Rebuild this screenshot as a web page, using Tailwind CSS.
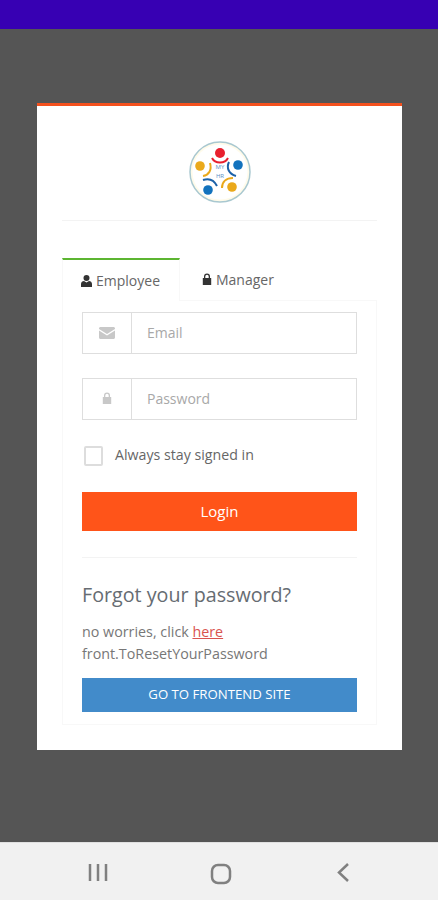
<!DOCTYPE html>
<html lang="en">
<head>
    <meta charset="UTF-8">
    <meta name="viewport" content="width=device-width, initial-scale=1.0">
    <title>Login</title>
    <script src="https://cdn.jsdelivr.net/npm/@tailwindcss/browser@4"></script>
</head>
<body class="font-['Open_Sans',sans-serif] bg-[#555555]">
    <div class="flex flex-col h-[900px] w-[438px] overflow-hidden">
        <div class="h-[29px] shrink-0 bg-[#3700b3]"></div>

        <main class="flex-1 pt-[74px] px-[37px]">
            <div class="w-[365px] h-[647px] bg-white border-t-[3px] border-[#f4511e] px-[25px]">
                <!-- logo -->
                <div class="h-[115px] pt-[35px] border-b border-[#f3f3f3] flex justify-center">
                    <svg class="w-[62px] h-[62px]" viewBox="0 0 62 62" fill="none">
                        <circle cx="31" cy="31" r="30" fill="#fffbea" stroke="#a9c8d0" stroke-width="1.500"/>
                        <circle cx="31" cy="31" r="27.500" fill="#ffffff"/>
                        <circle cx="31" cy="12" r="5" fill="#e8202e"/>
                        <path d="M23 17c3 6 13 6 16 0" stroke="#e8202e" stroke-width="2"/>
                        <circle cx="49" cy="24" r="4.800" fill="#1272bd"/>
                        <path d="M40 21c-3 6 0 12 7 14" stroke="#1c62a8" stroke-width="2"/>
                        <circle cx="11" cy="25" r="4.800" fill="#eaa91b"/>
                        <path d="M21 22c2 7-1 12-7 13" stroke="#eaa91b" stroke-width="2"/>
                        <circle cx="19" cy="49" r="4.800" fill="#1272bd"/>
                        <path d="M14 39c6-2 11 0 14 6" stroke="#1c62a8" stroke-width="2"/>
                        <circle cx="43" cy="46" r="4.800" fill="#eaa91b"/>
                        <path d="M33 47c0-6 4-10 11-10" stroke="#eaa91b" stroke-width="2"/>
                        <text x="31" y="28" text-anchor="middle" font-size="6" fill="#5b8fc4" font-family="Open Sans">MY</text>
                        <text x="31" y="37" text-anchor="middle" font-size="6" fill="#5b8fc4" font-family="Open Sans">HR</text>
                    </svg>
                </div>

                <!-- tabs -->
                <div class="flex mt-[37px] h-[42px] text-[14px] text-[#666666]">
                    <div class="w-[118px] border-t-2 border-x border-t-[#5cb531] border-x-[#f8f8f8] bg-white flex items-center pl-[18px] gap-[4px] relative z-10 h-[43px]">
                        <svg class="w-[11px] h-[12px]" viewBox="0 0 11 12" fill="#333333"><circle cx="5.500" cy="3" r="3"/><path d="M0 12V9c0-2 1.500-3 3-3l2.500 1.500L8 6c1.500 0 3 1 3 3v3z"/></svg>
                        <span>Employee</span>
                    </div>
                    <div class="flex items-center pl-[22px] gap-[4px]">
                        <svg class="w-[10px] h-[12px]" viewBox="0 0 10 12" fill="#333333"><path d="M2 5V3.500a3 3 0 0 1 6 0V5h1.200v7H.8V5zm1.300 0h3.400V3.500a1.700 1.700 0 0 0-3.400 0z"/></svg>
                        <span>Manager</span>
                    </div>
                </div>

                <!-- tab content -->
                <div class="w-[315px] h-[425px] border border-[#f8f8f8] px-[19px] pt-[11px]">
                    <div class="flex h-[42px] border-[1.500px] border-[#dedede]">
                        <div class="w-[49px] border-r-[1.500px] border-[#dedede] flex items-center justify-center">
                            <svg class="w-[16px] h-[12px]" viewBox="0 0 16 12" fill="#c8c8c8"><path d="M0 1.500C0 .7.700 0 1.500 0h13c.8 0 1.500.7 1.500 1.500v.5L8 7 0 2zM0 3.500 8 8.500l8-5V10.500c0 .8-.7 1.500-1.500 1.500h-13C.7 12 0 11.300 0 10.500z"/></svg>
                        </div>
                        <div class="flex-1 flex items-center pl-[15px] pb-[1px] text-[14px] text-[#a8a8a8]">Email</div>
                    </div>

                    <div class="flex h-[42px] mt-[24px] border-[1.500px] border-[#dedede]">
                        <div class="w-[49px] border-r-[1.500px] border-[#dedede] flex items-center justify-center">
                            <svg class="w-[10px] h-[12px] -mt-[3px]" viewBox="0 0 10 12" fill="#c8c8c8"><path d="M2 5V3.500a3 3 0 0 1 6 0V5h1.200v7H.8V5zm1.300 0h3.400V3.500a1.700 1.700 0 0 0-3.400 0z"/></svg>
                        </div>
                        <div class="flex-1 flex items-center pl-[15px] pb-[2px] text-[14px] text-[#a8a8a8]">Password</div>
                    </div>

                    <div class="flex items-center mt-[25px] ml-[2px] h-[22px]">
                        <div class="w-[19px] h-[20px] border-2 border-[#dddddd] rounded-[2px]"></div>
                        <span class="ml-[12px] text-[14.200px] text-[#666666] -mt-[2px]">Always stay signed in</span>
                    </div>

                    <button class="block w-full h-[39px] mt-[25px] bg-[#ff5419] text-white text-[15px]">Login</button>

                    <div class="mt-[26px] border-t border-[#f3f3f3]"></div>

                    <h2 class="mt-[22px] text-[19.700px] leading-[30px] text-[#666c72]">Forgot your password?</h2>

                    <p class="mt-[11px] text-[14.300px] leading-[22px] text-[#777777]">no worries, click <a class="text-[#d9534f] underline">here</a><br>front.ToResetYourPassword</p>

                    <button class="block w-full h-[34px] mt-[13px] bg-[#428bca] text-white text-[13.200px]">GO TO FRONTEND SITE</button>
                </div>
            </div>
        </main>

        <!-- android nav bar -->
        <nav class="h-[58px] shrink-0 bg-[#f1f1f1] border-t border-[#e0e0e0] relative">
            <svg class="absolute left-[88px] top-[20px] w-[20px] h-[20px]" viewBox="0 0 20 20" stroke="#808080" stroke-width="2.500" fill="none"><path d="M2 1v17M10 1v17M18 1v17"/></svg>
            <svg class="absolute left-[210px] top-[20px] w-[22px] h-[22px]" viewBox="0 0 22 22" stroke="#808080" stroke-width="2.500" fill="none"><rect x="2" y="2" width="18" height="18" rx="6"/></svg>
            <svg class="absolute left-[336px] top-[20px] w-[14px] h-[20px]" viewBox="0 0 14 20" stroke="#808080" stroke-width="2.500" fill="none"><path d="M12 1 3 9.500 12 18"/></svg>
        </nav>
    </div>
</body>
</html>
